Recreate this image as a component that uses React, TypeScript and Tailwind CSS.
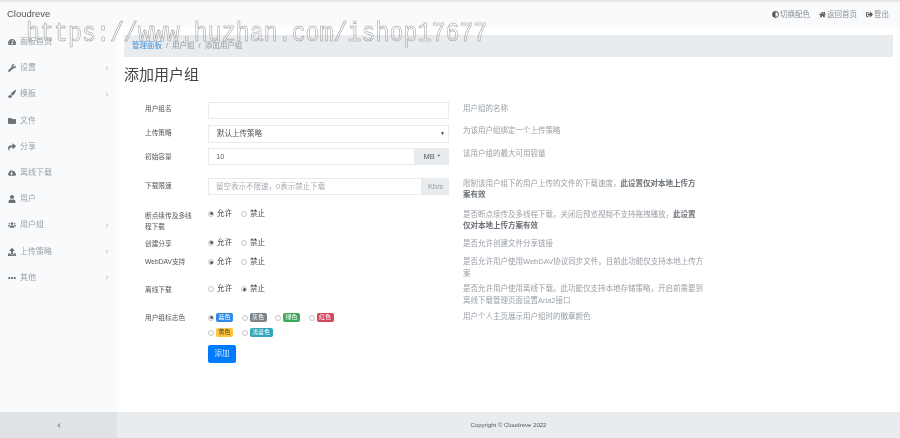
import React from 'react'
import {
  FaAdjust,
  FaChevronLeft,
  FaChevronRight,
  FaCloudDownloadAlt,
  FaEllipsisH,
  FaFolder,
  FaHome,
  FaPaintBrush,
  FaShare,
  FaSignOutAlt,
  FaTachometerAlt,
  FaUpload,
  FaUser,
  FaUsers,
  FaWrench
} from 'react-icons/fa'

const sidebarItems = [
  { icon: FaTachometerAlt, label: '面板首页' },
  { icon: FaWrench, label: '设置', arrow: true },
  { icon: FaPaintBrush, label: '模板', arrow: true },
  { icon: FaFolder, label: '文件' },
  { icon: FaShare, label: '分享' },
  { icon: FaCloudDownloadAlt, label: '离线下载' },
  { icon: FaUser, label: '用户' },
  { icon: FaUsers, label: '用户组', arrow: true },
  { icon: FaUpload, label: '上传策略', arrow: true },
  { icon: FaEllipsisH, label: '其他', arrow: true }
]

const Radio: React.FC<{ checked?: boolean }> = ({ checked }) => (
  <span className="w-[6px] h-[6px] rounded-full border border-[#c4c4c4] bg-white flex items-center justify-center shrink-0">
    {checked && <span className="w-[3px] h-[3px] rounded-full bg-[#555]" />}
  </span>
)

const RadioPair: React.FC<{ allow: boolean }> = ({ allow }) => (
  <div className="flex items-center text-[7.5px] leading-[10px] text-[#444]">
    <Radio checked={allow} />
    <span className="ml-[3px] w-[24px]">允许</span>
    <Radio checked={!allow} />
    <span className="ml-[3px]">禁止</span>
  </div>
)

const Badge: React.FC<{ checked?: boolean; label: string; className: string }> = ({ checked, label, className }) => (
  <div className="flex items-center gap-[2px] w-[33.5px]">
    <Radio checked={checked} />
    <span className={`rounded-[2px] px-[2.5px] h-[9px] leading-[9px] text-[6px] whitespace-nowrap ${className}`}>
      {label}
    </span>
  </div>
)

const Row: React.FC<{
  label: React.ReactNode
  help?: React.ReactNode
  className: string
  children: React.ReactNode
}> = ({ label, help, className, children }) => (
  <div className={`flex items-start ${className}`}>
    <div className="w-[63px] pr-[14px] text-[6.7px] leading-[13px] text-[#555]">{label}</div>
    <div className="w-[241px]">{children}</div>
    <div className="w-[245px] ml-[14px] text-[7.5px] leading-[11.5px] text-[#9aa0a6]">{help}</div>
  </div>
)

const inputBox = 'h-[17.5px] border border-[#e8eaec] bg-white flex items-center px-[7px] text-[7.5px]'

export default function App() {
  return (
    <div
      className="relative w-[900px] h-[438px] overflow-hidden bg-white blur-[0.4px]"
      style={{ fontFamily: '"Liberation Sans", "Noto Sans CJK SC", sans-serif' }}
    >
      <div className="h-[2px] bg-[#e6e8ea]" />
      <header className="h-[25px] bg-[#f9fafb] flex items-center justify-between pl-[7px] pr-[11px]">
        <span className="text-[9.5px] text-[#555]">Cloudreve</span>
        <div className="flex items-center text-[7.5px] text-[#8a9096]">
          <FaAdjust className="w-[7px] h-[7px] mr-[1px] text-[#555]" />
          <span>切换配色</span>
          <FaHome className="w-[7px] h-[7px] ml-[9px] mr-[1px] text-[#555]" />
          <span>返回首页</span>
          <FaSignOutAlt className="w-[7px] h-[7px] ml-[9px] mr-[1px] text-[#555]" />
          <span>登出</span>
        </div>
      </header>

      <div className="flex h-[385px]">
        <aside className="w-[117px] shrink-0 bg-[#f9fafb] pt-[2px] shadow-[2px_0_6px_rgba(0,0,0,0.02)]">
          {sidebarItems.map(item => (
            <div key={item.label} className="h-[26.2px] flex items-center pl-[8px] pr-[8px] text-[8px] text-[#9aa0a6]">
              <item.icon className="w-[8px] h-[8px] text-[#6c7278] shrink-0" />
              <span className="ml-[4px] flex-1">{item.label}</span>
              {item.arrow && <FaChevronRight className="w-[4px] h-[5px] text-[#c0c4c8]" />}
            </div>
          ))}
        </aside>

        <main className="flex-1 pl-[7px] pr-[7px] pt-[8px]">
          <div className="h-[22px] bg-[#e9ecef] flex items-center pl-[8px] text-[7.5px] text-[#8f969c]">
            <span className="text-[#3f8fdc]">管理面板</span>
            <span className="mx-[4px]">/</span>
            <span>用户组</span>
            <span className="mx-[4px]">/</span>
            <span>添加用户组</span>
          </div>
          <h1 className="mt-[9px] h-[36px] text-[15px] leading-[18px] text-[#444]">添加用户组</h1>

          <div className="pl-[21px]">
            <Row className="h-[23px]" label="用户组名" help={<div className="pt-[1px]">用户组的名称</div>}>
              <div className={`${inputBox} h-[17px]`} />
            </Row>
            <Row className="h-[22.5px]" label={<div className="pt-[1px]">上传策略</div>} help="为该用户组绑定一个上传策略">
              <div className={`${inputBox} justify-between text-[#555] pr-[3px] pl-[8px]`}>
                <span>默认上传策略</span>
                <span className="text-[5px] text-[#333]">▼</span>
              </div>
            </Row>
            <Row className="h-[30px]" label={<div className="pt-[2px]">初始容量</div>} help="该用户组的最大可用容量">
              <div className="flex h-[17.5px]">
                <div className={`${inputBox} flex-1 text-[#666]`}>10</div>
                <div className="w-[34px] bg-[#e9ecef] flex items-center justify-center gap-[2px] text-[7.5px] text-[#555]">
                  MB <span className="text-[4px]">▼</span>
                </div>
              </div>
            </Row>
            <Row
              className="h-[31px]"
              label={<div className="pt-[1px]">下载限速</div>}
              help={
                <>
                  限制该用户组下的用户上传的文件的下载速度，<b className="text-[#6c7278]">此设置仅对本地上传方<br />案有效</b>
                </>
              }
            >
              <div className="flex h-[17.5px]">
                <div className={`${inputBox} flex-1 text-[#a4aab0]`}>留空表示不限速，0表示禁止下载</div>
                <div className="w-[27px] bg-[#e9ecef] flex items-center justify-center text-[7.5px] text-[#8f969c]">Kb/s</div>
              </div>
            </Row>
            <Row
              className="h-[29px]"
              label={<div className="leading-[11.5px] pt-[1px]">断点续传及多线程下载</div>}
              help={
                <>
                  是否断点续传及多线程下载，关闭后预览视频不支持拖拽播放，<b className="text-[#6c7278]">此设置<br />仅对本地上传方案有效</b>
                </>
              }
            >
              <RadioPair allow />
            </Row>
            <Row className="h-[18.5px]" label={<div className="-mt-[1px]">创建分享</div>} help="是否允许创建文件分享链接">
              <RadioPair allow />
            </Row>
            <Row
              className="h-[27px]"
              label={<div className="-mt-[1px]">WebDAV支持</div>}
              help={
                <>
                  是否允许用户使用WebDAV协议同步文件。目前此功能仅支持本地上传方<br />案
                </>
              }
            >
              <div className="pt-[1px]">
                <RadioPair allow />
              </div>
            </Row>
            <Row className="h-[28px]" label="离线下载" help="是否允许用户使用离线下载。此功能仅支持本地存储策略，开启前需要到离线下载管理页面设置Aria2接口">
              <div className="pt-[1px]">
                <RadioPair allow={false} />
              </div>
            </Row>
            <Row className="h-[33.5px]" label="用户组标志色" help="用户个人主页展示用户组时的徽章颜色">
              <div className="flex flex-wrap gap-y-[3px] pt-[2px]">
                <Badge checked label="蓝色" className="bg-[#2f8ae8] text-white" />
                <Badge label="灰色" className="bg-[#7c848b] text-white" />
                <Badge label="绿色" className="bg-[#3fa958] text-white" />
                <Badge label="红色" className="bg-[#d2485a] text-white" />
                <div className="w-full h-0" />
                <Badge label="黄色" className="bg-[#ffc63a] text-[#444]" />
                <Badge label="浅蓝色" className="bg-[#30a5b8] text-white" />
              </div>
            </Row>
            <div className="pl-[63px]">
              <button className="block w-[28px] h-[18px] rounded-[2px] bg-[#007bff] text-[#dbeafe] text-[7.5px]">添加</button>
            </div>
          </div>
        </main>
      </div>

      <footer className="h-[26px] flex bg-[#e9ecef]">
        <div className="w-[117px] bg-[#dfe3e7] flex items-center justify-center">
          <FaChevronLeft className="w-[4px] h-[5px] text-[#6c757d]" />
        </div>
        <div className="flex-1 flex items-center justify-center text-[6px] text-[#555]">Copyright © Cloudreve 2022</div>
      </footer>

      <div
        className="absolute left-[26px] top-[17px] origin-top text-[23.3px] leading-[28px] whitespace-nowrap text-transparent scale-y-[1.2] [-webkit-text-stroke:0.5px_#9a9a9a]"
        style={{ fontFamily: '"Liberation Mono", monospace' }}
      >
        https://www.huzhan.com/ishop17677
      </div>
    </div>
  )
}
